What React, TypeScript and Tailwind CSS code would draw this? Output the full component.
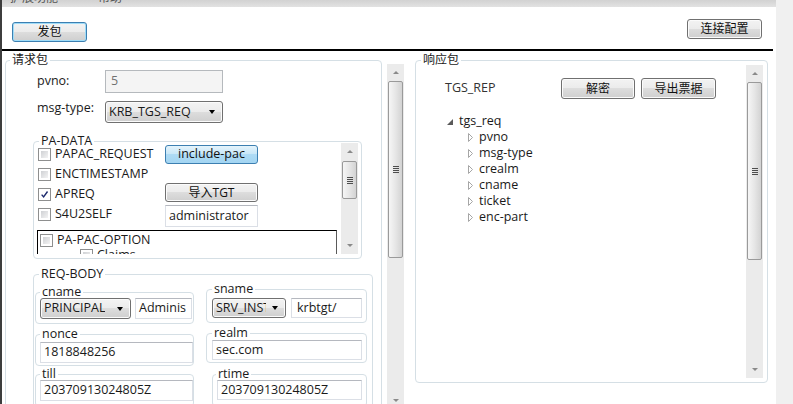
import React from "react";

const btnBg =
  "bg-[linear-gradient(#f3f3f3_0%,#ebebeb_50%,#dddddd_50%,#cfcfcf_100%)]";

function Btn({
  children,
  className = "",
  variant = "normal",
}: {
  children: React.ReactNode;
  className?: string;
  variant?: "normal" | "focus" | "blue";
}) {
  const look =
    variant === "blue"
      ? "border-[#3c7fb1] bg-[linear-gradient(#e4f4fc_0%,#c7e6f7_50%,#aedbf5_50%,#a3d5f2_100%)]"
      : variant === "focus"
        ? `border-[#3c7fb1] shadow-[inset_0_0_0_1px_#9fdcf8] ${btnBg}`
        : `border-[#707070] shadow-[inset_0_0_0_1px_#fbfbfb] ${btnBg}`;
  return (
    <div
      className={`flex shrink-0 items-center justify-center rounded-[3px] border text-[#111] ${look} ${className}`}
    >
      {children}
    </div>
  );
}

function TextBox({
  children,
  className = "",
}: {
  children?: React.ReactNode;
  className?: string;
}) {
  return (
    <div
      className={`flex shrink-0 items-center overflow-hidden whitespace-nowrap border border-[#dbdfe6] border-t-[#b5b8bf] bg-white pl-[3px] text-[#1a1a1a] ${className}`}
    >
      {children}
    </div>
  );
}

function Combo({
  children,
  className = "",
  textClass = "",
}: {
  children: React.ReactNode;
  className?: string;
  textClass?: string;
}) {
  return (
    <div
      className={`flex shrink-0 items-center justify-between rounded-[3px] border border-[#707070] pl-[3px] pr-[7px] shadow-[inset_0_0_0_1px_#fbfbfb] ${btnBg} ${className}`}
    >
      <span className={`overflow-hidden whitespace-nowrap ${textClass}`}>{children}</span>
      <span className="h-0 w-0 border-x-[3.5px] border-t-[4px] border-x-transparent border-t-black" />
    </div>
  );
}

function Check({ checked = false }: { checked?: boolean }) {
  return (
    <div className="flex h-[13px] w-[13px] shrink-0 items-center justify-center border border-[#8e8f8f] bg-white p-[2px]">
      {checked ? (
        <svg width="11" height="11" viewBox="0 0 11 11" className="-m-[1px]">
          <path d="M2 5.6 L4.4 8.4 L9.2 1.8" fill="none" stroke="#1d2a6e" strokeWidth="1.7" />
        </svg>
      ) : (
        <div className="h-full w-full bg-linear-to-br from-[#cfd1d4] to-[#f4f4f4]" />
      )}
    </div>
  );
}

function Group({
  label,
  className = "",
  legendClass = "",
  children,
}: {
  label: string;
  className?: string;
  legendClass?: string;
  children?: React.ReactNode;
}) {
  return (
    <fieldset
      className={`min-w-0 shrink-0 rounded-[4px] border border-[#d5dfe5] ${className}`}
    >
      <legend className={`px-[2px] text-[12.5px] text-[#1a1a1a] ${legendClass}`}>
        {label}
      </legend>
      {children}
    </fieldset>
  );
}

function VScroll({ className = "", thumbClass = "" }: { className?: string; thumbClass?: string }) {
  return (
    <div className={`flex w-[17px] shrink-0 flex-col items-center bg-[#ebebeb] ${className}`}>
      <div className="flex h-[17px] w-full items-center justify-center">
        <span className="h-0 w-0 border-x-[3px] border-b-[3px] border-x-transparent border-b-[#8a8a8a]" />
      </div>
      <div
        className={`flex w-[15px] items-center justify-center rounded-[2px] border border-[#9a9a9a] bg-[linear-gradient(90deg,#f6f6f6,#e6e6e6_50%,#d3d3d3)] ${thumbClass}`}
      >
        <div className="flex flex-col gap-[1px]">
          <span className="block h-[1px] w-[6px] bg-[#4d4d4d]" />
          <span className="block h-[1px] w-[6px] bg-[#4d4d4d]" />
          <span className="block h-[1px] w-[6px] bg-[#4d4d4d]" />
          <span className="block h-[1px] w-[6px] bg-[#4d4d4d]" />
        </div>
      </div>
      <div className="flex-1" />
      <div className="flex h-[17px] w-full items-center justify-center">
        <span className="h-0 w-0 border-x-[3px] border-t-[3px] border-x-transparent border-t-[#8a8a8a]" />
      </div>
    </div>
  );
}

function Expanded() {
  return (
    <svg width="6" height="6" viewBox="0 0 6 6" className="shrink-0">
      <path d="M6 0 L6 6 L0 6 Z" fill="#5a5a5a" />
    </svg>
  );
}

function Collapsed() {
  return (
    <svg width="6" height="9" viewBox="0 0 6 9" className="shrink-0">
      <path d="M0.5 0.5 L4.5 4.5 L0.5 8.5 Z" fill="#fff" stroke="#a6a6a6" strokeWidth="1" />
    </svg>
  );
}

const paRows = [
  { label: "PAPAC_REQUEST", checked: false },
  { label: "ENCTIMESTAMP", checked: false },
  { label: "APREQ", checked: true },
  { label: "S4U2SELF", checked: false },
];

const treeChildren = ["pvno", "msg-type", "crealm", "cname", "ticket", "enc-part"];

export default function App() {
  return (
    <div className="flex h-[404px] w-[793px] overflow-hidden bg-white font-['Open_Sans','Noto_Sans_CJK_SC',sans-serif] text-[12.5px] text-[#1a1a1a]">
      <div className="flex h-full w-[776px] shrink-0 flex-col border-l-2 border-[#3d3d3d]">
        {/* clipped tab strip */}
        <div className="h-[7px] shrink-0 overflow-hidden bg-[linear-gradient(#d2d2d2,#e2e2e2)]">
          <div className="-mt-[11px] ml-[8px] flex gap-[40px] text-[12px] text-[#555]">
            <span>扩展功能</span>
            <span>帮助</span>
          </div>
        </div>

        {/* toolbar */}
        <div className="flex h-[42px] shrink-0 items-start justify-between">
          <Btn variant="focus" className="ml-[10px] mt-[15px] h-[20px] w-[75px] text-[12px]">
            发包
          </Btn>
          <Btn className="mr-[14px] mt-[12px] h-[20px] w-[75px] text-[12px]">连接配置</Btn>
        </div>
        <div className="h-[2px] w-[771px] shrink-0 bg-black" />

        {/* content */}
        <div className="flex items-start">
          {/* 请求包 */}
          <Group label="请求包" className="ml-[3px] mt-[2px] h-[400px] w-[377px]" legendClass="ml-[4px] text-[12px] leading-[14px]">
            <div className="mt-[3px] flex h-[23px] items-center">
              <span className="ml-[31px] w-[68px]">pvno:</span>
              <div className="flex h-[23px] w-[118px] items-center border border-[#b5b9bd] bg-[#f4f4f4] pl-[5px] text-[#707070]">
                5
              </div>
            </div>
            <div className="mt-[8px] flex h-[22px] items-start">
              <span className="-mt-[2px] ml-[31px] w-[68px]">msg-type:</span>
              <Combo className="h-[22px] w-[118px]">KRB_TGS_REQ</Combo>
            </div>

            {/* PA-DATA */}
            <Group label="PA-DATA" className="ml-[27px] mt-[12px] h-[124px] w-[329px]" legendClass="ml-[5px] leading-[12px]">
              <div className="-mt-[4px] flex">
                <div className="h-[111px] w-[307px] overflow-hidden">
                  <div className="flex h-[87px] items-start">
                    <div className="ml-[4px] mt-[5px] flex w-[127px] flex-col">
                      {paRows.map((r) => (
                        <div key={r.label} className="flex h-[20px] items-start">
                          <div className="flex h-[13px] items-center gap-[4px]">
                            <Check checked={r.checked} />
                            <span className="whitespace-nowrap">{r.label}</span>
                          </div>
                        </div>
                      ))}
                    </div>
                    <div className="mt-[2px] flex flex-col">
                      <Btn variant="blue" className="h-[19px] w-[93px]">
                        include-pac
                      </Btn>
                      <Btn className="mt-[19px] h-[19px] w-[93px] text-[12px]">导入TGT</Btn>
                      <TextBox className="mt-[3px] h-[22px] w-[93px]">administrator</TextBox>
                    </div>
                  </div>
                  <div className="ml-[3px] h-[40px] w-[300px] border border-b-0 border-black border-r-[#5a5a5a]">
                    <div className="ml-[2px] mt-[3px] flex h-[13px] items-center gap-[4px]">
                      <Check />
                      <span>PA-PAC-OPTION</span>
                    </div>
                    <div className="ml-[42px] mt-[2px] flex h-[13px] items-center gap-[4px]">
                      <Check />
                      <span>Claims</span>
                    </div>
                  </div>
                </div>
                <VScroll className="h-[111px]" thumbClass="mt-[1px] h-[38px]" />
              </div>
            </Group>

            {/* REQ-BODY */}
            <Group label="REQ-BODY" className="ml-[27px] mt-[8px] h-[160px] w-[340px]" legendClass="ml-[5px] leading-[14px]">
              <div className="flex items-start">
                <Group label="cname" className="ml-[1px] mt-[4px] h-[39px] w-[159px]" legendClass="ml-[4px] leading-[14px]">
                  <div className="-mt-[1px] ml-[4px] flex gap-[4px]">
                    <Combo className="h-[21px] w-[91px]">PRINCIPAL</Combo>
                    <TextBox className="h-[21px] w-[57px]">Adminis</TextBox>
                  </div>
                </Group>
                <Group label="sname" className="ml-[12px] mt-[1px] h-[41px] w-[161px]" legendClass="ml-[5px] leading-[14px]">
                  <div className="ml-[5px] mt-[2px] flex gap-[5px]">
                    <Combo className="h-[20px] w-[74px]" textClass="w-[50px]">
                      SRV_INST
                    </Combo>
                    <TextBox className="h-[20px] w-[71px] pl-[5px]">krbtgt/</TextBox>
                  </div>
                </Group>
              </div>
              <div className="mt-[2px] flex items-start">
                <Group label="nonce" className="ml-[1px] mt-[1px] h-[39px] w-[159px]" legendClass="ml-[4px] leading-[14px]">
                  <TextBox className="ml-[4px] mt-[1px] h-[21px] w-[153px]">1818848256</TextBox>
                </Group>
                <Group label="realm" className="ml-[12px] h-[37px] w-[161px]" legendClass="ml-[5px] leading-[14px]">
                  <TextBox className="ml-[5px] h-[20px] w-[150px]">sec.com</TextBox>
                </Group>
              </div>
              <div className="mt-[1px] flex items-start">
                <Group label="till" className="ml-[1px] h-[40px] w-[159px]" legendClass="ml-[4px] leading-[14px]">
                  <TextBox className="-mt-[1px] ml-[4px] h-[21px] w-[153px]">20370913024805Z</TextBox>
                </Group>
                <Group label="rtime" className="ml-[18px] h-[40px] w-[155px]" legendClass="ml-[3px] leading-[14px]">
                  <TextBox className="-mt-[1px] ml-[4px] h-[20px] w-[145px]">20370913024805Z</TextBox>
                </Group>
              </div>
            </Group>
          </Group>

          <VScroll className="ml-[5px] mt-[13px] h-[345px]" thumbClass="h-[177px]" />

          {/* 响应包 */}
          <Group label="响应包" className="ml-[11px] mt-[2px] h-[330px] w-[353px]" legendClass="ml-[5px] text-[12px] leading-[14px]">
            <div className="-mt-[2px] flex">
              <div className="w-[330px]">
                <div className="mt-[13px] flex h-[21px] items-center">
                  <span className="ml-[29px] w-[116px] text-[#333]">TGS_REP</span>
                  <Btn className="h-[21px] w-[74px] text-[12px]">解密</Btn>
                  <Btn className="ml-[6px] h-[21px] w-[75px] text-[12px]">导出票据</Btn>
                </div>
                <div className="mt-[14px] flex flex-col">
                  <div className="flex h-[16px] items-center">
                    <span className="ml-[31px] mt-[2px]">
                      <Expanded />
                    </span>
                    <span className="ml-[6px]">tgs_req</span>
                  </div>
                  {treeChildren.map((c) => (
                    <div key={c} className="flex h-[16px] items-center">
                      <span className="ml-[52px]">
                        <Collapsed />
                      </span>
                      <span className="ml-[5px]">{c}</span>
                    </div>
                  ))}
                </div>
              </div>
              <VScroll className="h-[313px]" thumbClass="h-[178px]" />
            </div>
          </Group>
        </div>
      </div>
      <div className="h-full flex-1 bg-[#f0f0f0]" />
    </div>
  );
}
